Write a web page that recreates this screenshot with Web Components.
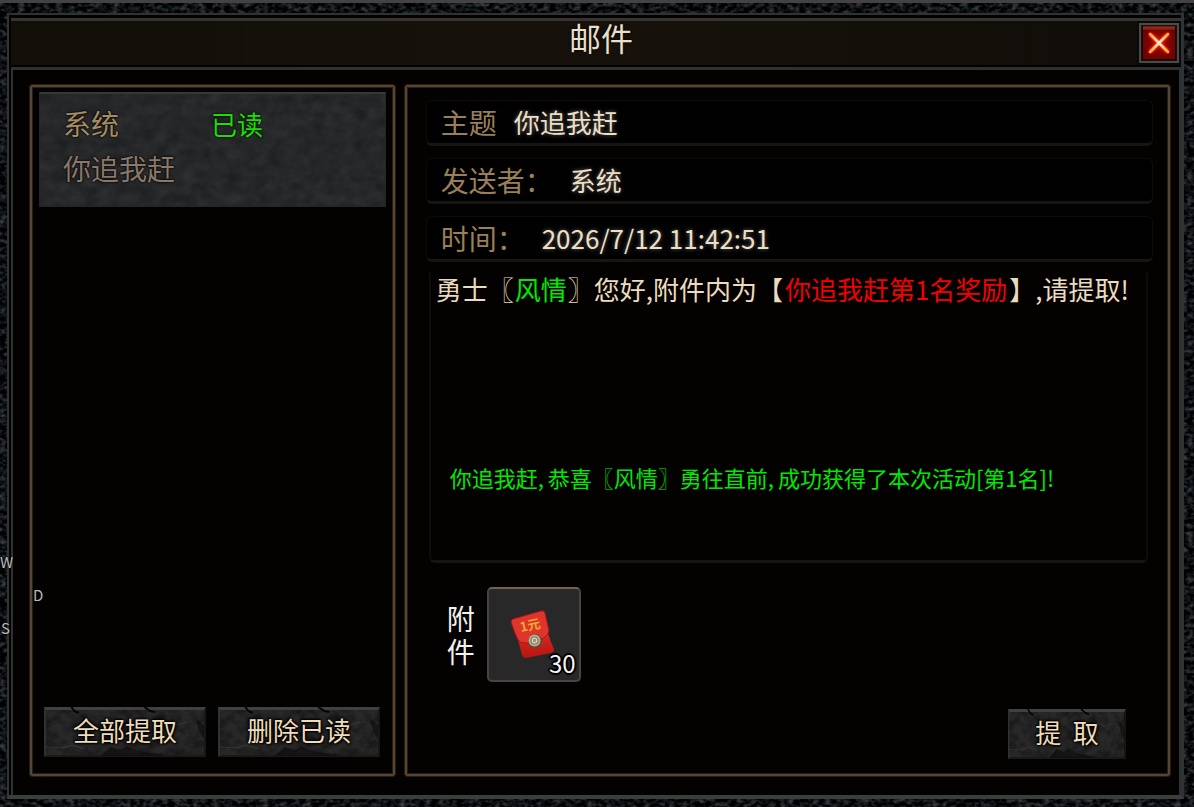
<!DOCTYPE html>
<html lang="zh-CN">
<head>
<meta charset="utf-8">
<title>邮件</title>
<style>
  html { background: #000; }
  body { margin: 0; font-family: "Noto Sans CJK SC", "Noto Sans", sans-serif; color: #ecdfc4; background: #000; }
</style>
</head>
<body>
<mail-window heading="邮件">
  <gold-panel slot="list">
    <mail-item sender="系统" state="已读">你追我赶</mail-item>
    <stone-button slot="actions">全部提取</stone-button>
    <stone-button slot="actions">删除已读</stone-button>
  </gold-panel>
  <gold-panel slot="detail" class="detail">
    <mail-detail>
      <mail-field label="主题">你追我赶</mail-field>
      <mail-field label="发送者：">系统</mail-field>
      <mail-field label="时间：">2026/7/12 11:42:51</mail-field>
      <mail-message slot="message"></mail-message>
      <item-slot slot="attachment" count="30"></item-slot>
    </mail-detail>
    <stone-button slot="actions" size="small">提&nbsp; 取</stone-button>
  </gold-panel>
</mail-window>
<key-hints></key-hints>

<script>
const define = (name, html) => {
  const template = document.createElement('template');
  template.innerHTML = html;
  customElements.define(name, class extends HTMLElement {
    constructor() {
      super();
      this.attachShadow({ mode: 'open' }).append(template.content.cloneNode(true));
    }
    connectedCallback() {
      this.shadowRoot.querySelectorAll('[data-from]').forEach(el => {
        el.textContent = this.getAttribute(el.dataset.from) || '';
      });
    }
  });
};

define('rock-texture', `
<style>
  :host { position: absolute; inset: 0; z-index: -1; overflow: hidden; pointer-events: none; display: block; }
  svg { display: block; width: 100%; height: 100%; }
  .leather { display: none; }
  :host([kind="leather"]) .leather { display: block; }
  :host([kind="leather"]) .fine { display: none; }
</style>
<svg aria-hidden="true">
  <filter id="leather" x="0" y="0" width="100%" height="100%" color-interpolation-filters="sRGB">
    <feTurbulence type="fractalNoise" baseFrequency="0.16 0.24" numOctaves="2" seed="4"/>
    <feColorMatrix values="0.55 0 0 0 -0.22  0.55 0 0 0 -0.21  0.55 0 0 0 -0.2  0 0 0 0 1"/>
  </filter>
  <filter id="fine" x="0" y="0" width="100%" height="100%" color-interpolation-filters="sRGB">
    <feTurbulence type="fractalNoise" baseFrequency="0.07 0.09" numOctaves="5" seed="9"/>
    <feColorMatrix values="0.07 0.05 0 0 0.088  0.07 0.05 0 0 0.093  0.07 0.05 0 0 0.098  0 0 0 0 1"/>
  </filter>
  <rect class="leather" width="100%" height="100%" filter="url(#leather)"/>
  <rect class="fine" width="100%" height="100%" filter="url(#fine)"/>
</svg>`);

define('close-button', `
<style>
  :host { display: block; }
  button { display: grid; place-items: center; width: 44px; height: 44px; padding: 0; border: 2px solid #090908; background: #3d3b38; box-shadow: inset 0 0 0 2px #4c4a46, inset 0 0 0 4px #171110; cursor: pointer; }
  svg { display: block; width: 34px; height: 34px; }
</style>
<button aria-label="关闭">
  <svg viewBox="0 0 34 34" aria-hidden="true">
    <defs>
      <radialGradient id="r"><stop offset="0" stop-color="#c81208"/><stop offset=".55" stop-color="#800605"/><stop offset="1" stop-color="#720202"/></radialGradient>
      <radialGradient id="x" gradientUnits="userSpaceOnUse" cx="17" cy="17" r="14"><stop offset="0" stop-color="#fff3dc"/><stop offset=".5" stop-color="#ffc76c"/><stop offset="1" stop-color="#ffa238"/></radialGradient>
      <filter id="g" x="-30%" y="-30%" width="160%" height="160%"><feGaussianBlur stdDeviation="1.2"/></filter>
    </defs>
    <rect width="34" height="34" fill="#170504"/>
    <rect x="1" y="0" width="32" height="33" fill="url(#r)"/>
    <path d="M1 2H33" stroke="#872b12" stroke-width="3"/>
    <path d="M8 8L26 26M26 8L8 26" stroke="#ff1a08" stroke-width="5" filter="url(#g)"/>
    <path d="M8 8L26 26M26 8L8 26" stroke="url(#x)" stroke-width="2.8" stroke-linecap="round"/>
  </svg>
</button>`);

define('mail-window', `
<style>
  :host { display: flex; box-sizing: border-box; min-height: 100vh; padding: 13px 10px 8px 7px; position: relative; z-index: 0; border-top: 3px solid #454244; overflow: hidden; }
  .rim { flex: 1; min-width: 0; display: flex; flex-direction: column; background: #030201; margin-top: -3px; border: 2px solid #303336; border-right-width: 3px; border-bottom: 4px solid #3c3d3d; padding: 0 0 0 2px; }
  header { display: grid; grid-template-columns: 44px 1fr 44px; align-items: center; height: 44px; margin-top: 3px; border-top: 3px solid #363431; background: linear-gradient(90deg, #120f09, #16120b 50%, #100d08); }
  h1 { margin: 0; padding-left: 10px; text-align: center; font-weight: 400; font-size: 32px; line-height: 40px; color: #eadfca; text-shadow: 0 0 3px #000; grid-column: 2; align-self: start; margin-top: -4px; }
  main { flex: 1; display: grid; grid-template-columns: minmax(320px, 366fr) minmax(700px, 766fr); gap: 8px; padding: 14px 8px 18px 16px; border: solid #2e3132; border-width: 3px 2px 0; margin-top: 2px; }
  ::slotted(*) { min-width: 0; }
</style>
<rock-texture kind="leather"></rock-texture>
<div class="rim">
  <header><h1 data-from="heading"></h1><close-button></close-button></header>
  <main><slot name="list"></slot><slot name="detail"></slot></main>
</div>`);

define('gold-panel', `
<style>
  :host { display: flex; flex-direction: column; box-sizing: border-box; border: 1px solid #2d1c08; border-radius: 3px; box-shadow: inset 0 0 0 2px #50463a, inset 0 0 0 3px #2d1c08; padding: 7px 9px 19px; }
  .body { flex: 1; display: flex; flex-direction: column; }
  .actions { display: flex; gap: 12px; padding: 0 5px; }
  :host(.detail) { padding: 15px 17px 17px 21px; }
  :host(.detail) .actions { justify-content: flex-end; padding: 0 27px; }
</style>
<div class="body"><slot></slot></div>
<div class="actions"><slot name="actions"></slot></div>`);

define('mail-item', `
<style>
  :host { display: block; }
  button { position: relative; z-index: 0; display: grid; grid-template-columns: 148px 1fr; align-content: start; width: 100%; height: 115px; padding: 7px 23px; border: 1px solid #22262a; border-top: 2px solid #34383a; background: #26282a; font: inherit; font-size: 28px; line-height: 45px; text-align: left; cursor: pointer; text-shadow: 0 0 2px #000, 0 0 2px #000; }
  .sender { color: #a58c62; }
  .state { color: #1ee000; font-size: 26px; }
  .subject { color: #8b786a; grid-column: 1 / -1; }
</style>
<button>
  <rock-texture></rock-texture>
  <span class="sender" data-from="sender"></span>
  <span class="state" data-from="state"></span>
  <span class="subject"><slot></slot></span>
</button>`);

define('stone-button', `
<style>
  :host { display: block; width: 162px; }
  :host([size="small"]) { width: 118px; }
  button { position: relative; display: flex; justify-content: center; align-items: flex-start; width: 100%; height: 50px; padding: 0; border: 2px solid #303132; border-top: 3px solid #3f4142; border-right-color: #161616; border-bottom-color: #1a1a1a; background: #282828; color: #efdcb8; font: inherit; font-size: 26px; line-height: 40px; white-space: pre; cursor: pointer; text-shadow: 0 0 2px #000, 1px 1px 2px #000, -1px -1px 2px #000, 0 0 4px #000; }
  svg { position: absolute; left: -2px; top: -3px; width: calc(100% + 4px); height: 50px; }
  .text { position: relative; }
</style>
<button><svg viewBox="0 0 160 50" preserveAspectRatio="none" aria-hidden="true">
  <filter id="grain" x="0" y="0" width="100%" height="100%" color-interpolation-filters="sRGB">
    <feTurbulence type="fractalNoise" baseFrequency="0.09 0.12" numOctaves="4" seed="7"/>
    <feColorMatrix values="0 0 0 0 0.03  0 0 0 0 0.03  0 0 0 0 0.03  1.2 0 0 0 -0.45"/>
  </filter>
  <rect x="2" y="3" width="156" height="45" filter="url(#grain)"/>
  <path d="M27 0l3 4 4 2M99 0l6 4 5 1" fill="none" stroke="#050505" stroke-width="2"/>
  <path d="M56 49l10-9 10 3 6-4 14 6 18 2 6 2zM150 12l8 6v14l-5-8z" fill="#0a0a0a" opacity=".6"/>
  <path d="M2 40l16 1 10-3 12 4M120 14l12 4 8-3" fill="none" stroke="#555" opacity=".4"/>
</svg><span class="text"><slot></slot></span></button>`);

define('mail-field', `
<style>
  :host { display: block; }
  dl { display: flex; align-items: center; gap: 17px; height: 46px; margin: 0; padding: 0 14px; box-sizing: border-box; border: 1px solid #0d0c0b; border-bottom: 3px solid #171512; border-radius: 6px; background: #020101; box-shadow: inset 0 0 5px #000; white-space: nowrap; }
  dt { color: #998059; font-size: 28px; line-height: 40px; }
  dd { margin: 0; font-size: 26px; line-height: 40px; color: #ecdfc4; text-shadow: 0 0 4px #666; }
</style>
<dl><dt data-from="label"></dt><dd><slot></slot></dd></dl>`);

define('mail-message', `
<style>
  :host { display: flex; flex-direction: column; flex: 1; min-height: 280px; box-sizing: border-box; margin: 0 5px 0 3px; border: 2px solid #0e0d0b; border-bottom: 3px solid #171510; border-top-color: #040302; border-radius: 6px; padding: 0 5px; white-space: nowrap; }
  p { margin: 0; font-size: 26px; line-height: 36px; color: #ecdcbf; }
  b { font-weight: 400; color: #00ea00; padding: 0 1px; }
  b.prize { color: #f40000; padding: 0 2px; }
  .notice { display: flex; gap: 4px; margin-top: 152px; padding-left: 14px; font-size: 22px; color: #00ea00; }
</style>
<p>勇士〖<b>风情</b>〗您好,附件内为【<b class="prize">你追我赶第1名奖励</b>】,请提取!</p>
<p class="notice"><span>你追我赶,</span><span>恭喜〖风情〗勇往直前,</span><span>成功获得了本次活动[第1名]!</span></p>`);

define('item-slot', `
<style>
  :host { display: block; }
  button { position: relative; display: block; width: 94px; height: 95px; padding: 0; border: 2px solid #4a4346; border-top: 2px solid #766347; border-radius: 5px; background: #282828; font: inherit; cursor: pointer; }
  svg { display: block; width: 90px; height: 91px; }
  .count { position: absolute; right: 3px; bottom: 1px; font-size: 24px; line-height: 32px; color: #f4f4f4; text-shadow: 2px 0 1px #000, -2px 0 1px #000, 0 2px 1px #000, 0 -2px 1px #000, 1px 1px 1px #000, -1px -1px 1px #000; }
  text { font-family: "Noto Sans CJK SC", sans-serif; font-weight: 700; }
</style>
<button aria-label="红包">
  <svg viewBox="0 0 90 91" aria-hidden="true">
    <defs><linearGradient id="e" x1="0" y1="0" x2="0" y2="1"><stop offset="0" stop-color="#ed3a30"/><stop offset="1" stop-color="#b5150f"/></linearGradient></defs>
    <path d="M23 33L55 24Q58 46 65 60Q65 63 62 64L37 69Q34 69 33 66Q29 49 23 33Z" fill="url(#e)"/>
    <path d="M24 30L52 22Q55 21 56 24L60 42Q58 49 49 52Q41 56 31 53Q28 51 22 33Q22 31 24 30Z" fill="#df352c" stroke="#a31712"/>
    <text x="32" y="43" font-size="13" fill="#edab31" transform="rotate(-12 32 43)">1元</text>
    <circle cx="46" cy="52" r="7" fill="#5b4939"/><circle cx="45.500" cy="51.500" r="6" fill="#b9ae8d"/>
    <circle cx="45.500" cy="51.500" r="3.500" fill="#ddd4ba" stroke="#84785c" stroke-width="1.200"/><path d="M44 50h3v3h-3z" fill="#a09473"/>
  </svg>
  <span class="count" data-from="count"></span>
</button>`);

define('mail-detail', `
<style>
  :host { display: flex; flex-direction: column; flex: 1; }
  .fields { display: grid; gap: 12px; margin-bottom: 7px; }
  .attachment { display: flex; gap: 12px; align-items: center; padding: 24px 0 27px 21px; }
  .label { width: 28px; font-size: 28px; line-height: 33px; color: #f1f1ee; }
</style>
<div class="fields"><slot></slot></div>
<slot name="message"></slot>
<div class="attachment"><span class="label">附件</span><slot name="attachment"></slot></div>`);

define('key-hints', `
<style>
  :host { position: absolute; left: 0; top: 545px; font-size: 15px; line-height: 33px; color: #b9b9b6; pointer-events: none; display: grid; grid-template-columns: 33px auto; text-shadow: 0 0 2px #000; }
  .w { grid-area: 1 / 1; }
  .d { grid-area: 2 / 2; }
  .s { grid-area: 3 / 1; padding-left: 1px; }
</style>
<span class="w">W</span><span class="d">D</span><span class="s">S</span>`);
</script>
</body>
</html>
